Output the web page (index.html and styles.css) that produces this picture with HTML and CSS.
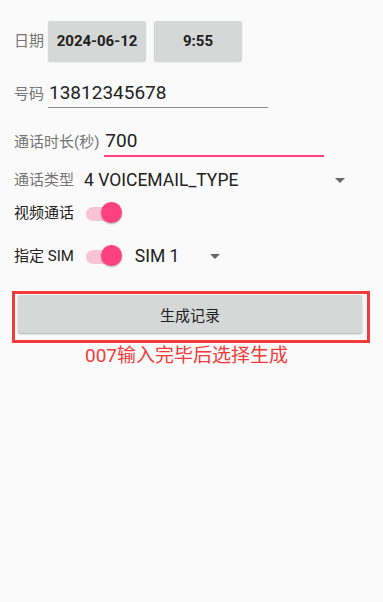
FILE: index.html
```html
<!DOCTYPE html>
<html lang="zh">
<head>
<meta charset="utf-8">
<title>生成记录</title>
<link rel="stylesheet" href="styles.css">
</head>
<body>
<div class="page">
  <div class="row row-date">
    <span class="label">日期</span>
    <div class="btn btn-date">2024-06-12</div>
    <div class="btn btn-time">9:55</div>
  </div>
  <div class="row row-phone">
    <span class="label">号码</span>
    <div class="input input-phone">13812345678</div>
  </div>
  <div class="row row-dur">
    <span class="label">通话时长(秒)</span>
    <div class="input input-dur">700</div>
  </div>
  <div class="row row-type">
    <span class="label">通话类型</span>
    <span class="value value-type">4 VOICEMAIL_TYPE</span>
    <span class="arrow arrow-type"></span>
  </div>
  <div class="row row-video">
    <span class="label dark">视频通话</span>
    <div class="switch"><span class="track"></span><span class="thumb"></span></div>
  </div>
  <div class="row row-sim">
    <span class="label dark">指定 SIM</span>
    <div class="switch"><span class="track"></span><span class="thumb"></span></div>
    <span class="value value-sim">SIM 1</span>
    <span class="arrow arrow-sim"></span>
  </div>
  <div class="highlight">
    <div class="btn btn-gen">生成记录</div>
  </div>
  <div class="hint">007输入完毕后选择生成</div>
</div>
</body>
</html>
```
FILE: styles.css
```css
html, body {
  margin: 0;
  padding: 0;
  background: #fafafa;
}
body {
  width: 383px;
  height: 602px;
  font-family: Roboto, "Noto Sans CJK SC", sans-serif;
  color: #222;
}
.page {
  padding-top: 21px;
}
.row {
  display: flex;
  padding-left: 14px;
}
.label {
  font-size: 15px;
  line-height: 22px;
  color: #757575;
  white-space: nowrap;
}
.label.dark {
  color: #222;
}
.btn {
  background: #d6d7d7;
  border-radius: 2px;
  box-shadow: 0 1px 1.5px rgba(0,0,0,0.18);
  display: flex;
  align-items: center;
  justify-content: center;
  color: #202020;
}
.row-date {
  height: 40px;
  align-items: center;
}
.btn-date {
  margin-left: 4px;
  width: 98px;
  height: 40px;
  font-size: 15px;
  font-weight: 700;
}
.btn-time {
  margin-left: 8px;
  width: 88px;
  height: 40px;
  font-size: 15px;
  font-weight: 700;
}
.row-phone {
  margin-top: 21px;
  align-items: baseline;
}
.input {
  font-size: 19px;
  line-height: 22px;
  padding-bottom: 3px;
  padding-left: 1px;
  color: #222;
}
.input-phone {
  margin-left: 4px;
  width: 219px;
  border-bottom: 1px solid #8a8a8a;
}
.row-dur {
  margin-top: 22px;
  align-items: baseline;
}
.input-dur {
  margin-left: 5px;
  width: 219px;
  border-bottom: 2px solid #ff4081;
}
.row-type {
  margin-top: 11px;
  height: 24px;
  align-items: center;
}
.value {
  font-size: 17.5px;
  line-height: 24px;
  color: #222;
  white-space: nowrap;
}
.value-type {
  margin-left: 10px;
}
.arrow {
  width: 0;
  height: 0;
  border-left: 5px solid transparent;
  border-right: 5px solid transparent;
  border-top: 5px solid #666;
}
.arrow-type {
  margin-left: auto;
  margin-right: 38px;
}
.row-video {
  margin-top: 9px;
  height: 24px;
  align-items: center;
}
.switch {
  position: relative;
  width: 37px;
  height: 22px;
  margin-left: 12px;
  flex: none;
}
.track {
  position: absolute;
  left: 0;
  top: 5px;
  width: 35px;
  height: 14px;
  border-radius: 7px;
  background: #f9c3d6;
}
.thumb {
  position: absolute;
  left: 15px;
  top: 0;
  width: 21px;
  height: 21px;
  border-radius: 50%;
  background: #ff4081;
  box-shadow: 0 1px 2px rgba(0,0,0,0.3);
}
.row-sim {
  margin-top: 19px;
  height: 24px;
  align-items: center;
}
.value-sim {
  margin-left: 12px;
}
.arrow-sim {
  margin-left: 31px;
}
.highlight {
  margin-top: 23px;
  margin-left: 12px;
  width: 344px;
  border: 3px solid #f53a3a;
  padding: 1px 5px 7px 3px;
}
.btn-gen {
  width: 344px;
  height: 38px;
  font-size: 15px;
  box-shadow: 0 1px 2px rgba(0,0,0,0.3);
}
.hint {
  margin-top: 1px;
  padding-left: 85px;
  font-size: 19px;
  line-height: 24px;
  color: #f53a3a;
  white-space: nowrap;
}
```
